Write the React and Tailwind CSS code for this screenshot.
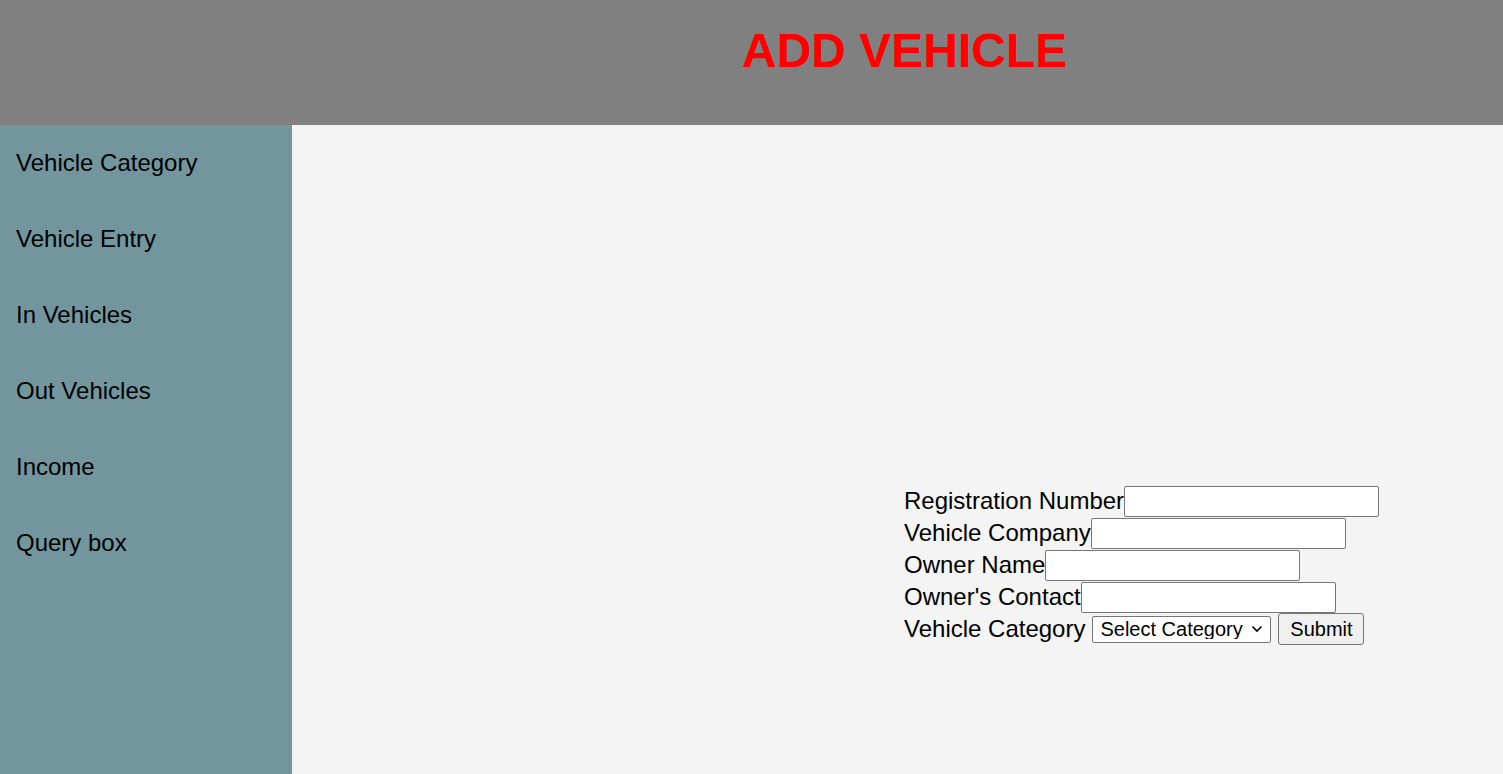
const MENU = ['Vehicle Category', 'Vehicle Entry', 'In Vehicles', 'Out Vehicles', 'Income', 'Query box'];

const FIELDS = [
  { label: 'Registration Number' },
  { label: 'Vehicle Company' },
  { label: 'Owner Name' },
  { label: "Owner's Contact" },
];

export default function App() {
  return (
    <div className="flex h-screen flex-col font-['Liberation_Sans',Arial,sans-serif] text-black">
      {/* header */}
      <header className="h-[125px] shrink-0 bg-[#808080] pl-[742px] pt-[27px]">
        <h1 className="text-[48px] font-bold leading-[48px] text-[#ff0000]">ADD VEHICLE</h1>
      </header>

      <div className="flex flex-1">
        {/* sidebar */}
        <nav className="w-[292px] shrink-0 bg-[#73969e]">
          {MENU.map((item) => (
            <div key={item} className="flex h-[76px] items-center pl-[16px] text-[24px]">
              {item}
            </div>
          ))}
        </nav>

        {/* form */}
        <main className="flex-1 bg-[#f4f4f4] pl-[612px] pt-[360px]">
          <form className="text-[24px]" onSubmit={(e) => e.preventDefault()}>
            {FIELDS.map(({ label }) => (
              <div key={label} className="flex h-[32px] items-center">
                <span>{label}</span>
                <input
                  type="text"
                  className="h-[31px] w-[255px] rounded-[2px] border border-[#767676] bg-white px-1 text-[20px]"
                />
              </div>
            ))}
            <div className="flex h-[32px] items-center">
              <span>Vehicle Category</span>
              <div className="relative ml-[7px] flex">
                <select className="h-[27px] w-[179px] appearance-none rounded-[2px] border border-[#767676] bg-white pl-[7px] text-[20px] leading-none">
                  <option>Select Category</option>
                </select>
                <svg
                  className="pointer-events-none absolute right-[8px] top-1/2 -translate-y-1/2"
                  width="12"
                  height="8"
                  viewBox="0 0 12 8"
                  fill="none"
                  stroke="black"
                  strokeWidth="1.6"
                >
                  <path d="M1.5 1.5 6 6l4.5-4.5" />
                </svg>
              </div>
              <button
                type="submit"
                className="ml-[7px] h-[32px] w-[86px] rounded-[3px] border border-[#767676] bg-[#efefef] text-[20px]"
              >
                Submit
              </button>
            </div>
          </form>
        </main>
      </div>
    </div>
  );
}
